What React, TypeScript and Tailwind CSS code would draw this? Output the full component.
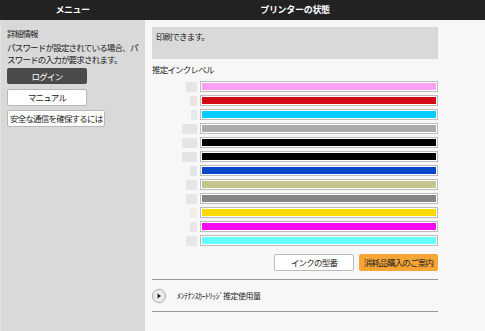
import React from "react";

const inks: { color: string; sq: string; w: string }[] = [
  { color: "#f9a0f6", sq: "#e6e4e6", w: "w-[11px]" },
  { color: "#d20a16", sq: "#efe2e4", w: "w-[7px]" },
  { color: "#00ccff", sq: "#e2ecef", w: "w-[6px]" },
  { color: "#ababab", sq: "#e4e4e4", w: "w-[15px]" },
  { color: "#000000", sq: "#e4e4e4", w: "w-[15px]" },
  { color: "#000000", sq: "#e4e4e4", w: "w-[15px]" },
  { color: "#0a46c8", sq: "#e2e4ee", w: "w-[7px]" },
  { color: "#c4c48e", sq: "#e6e6e6", w: "w-[11px]" },
  { color: "#858585", sq: "#e6e6e6", w: "w-[11px]" },
  { color: "#ffd800", sq: "#efefe4", w: "w-[7px]" },
  { color: "#f50af2", sq: "#ede2ed", w: "w-[7px]" },
  { color: "#66ffff", sq: "#e6e8e8", w: "w-[11px]" },
];

const font = "font-['Noto_Sans_CJK_JP','Noto_Sans',sans-serif]";

export default function App() {
  return (
    <div className={`w-[485px] h-[331px] flex flex-col bg-[#f7f7f7] text-[#222] ${font} overflow-hidden`}>
      <div className="flex h-[20px] bg-[#222222] text-white text-[9px] font-bold leading-[20px] shrink-0">
        <div className="w-[145px] text-center tracking-[-0.5px]">メニュー</div>
        <div className="w-[300px] text-center tracking-[-0.3px]">プリンターの状態</div>
      </div>
      <div className="flex flex-1">
        <div className="w-[145px] bg-[#d9d9d9] border-l border-[#e2e2e2] pl-[6px] pt-[8px] flex flex-col items-start">
          <div className="text-[8.5px] leading-[11px] tracking-[-0.8px]">詳細情報</div>
          <div className="mt-[2px] text-[8.5px] leading-[12px] tracking-[-0.8px] whitespace-nowrap">
            パスワードが設定されている場合、パ
            <br />
            スワードの入力が要求されます。
          </div>
          <div className="mt-[3px] w-[80px] h-[16px] bg-[#4b4b4b] rounded-[2px] text-white text-[8.5px] leading-[16px] text-center tracking-[-0.8px]">
            ログイン
          </div>
          <div className="mt-[5px] w-[80px] h-[17px] bg-white border border-[#b8b8b8] rounded-[2px] text-[8.5px] leading-[15px] text-center tracking-[-0.8px]">
            マニュアル
          </div>
          <div className="mt-[4px] h-[17px] bg-white border border-[#b8b8b8] rounded-[2px] px-[2px] text-[8.5px] leading-[15px] tracking-[-0.8px] whitespace-nowrap">
            安全な通信を確保するには
          </div>
        </div>
        <div className="flex-1 pl-[7px] pt-[7px]">
          <div className="w-[286px]">
            <div className="h-[32px] bg-[#d9d9d9] px-[4px] pt-[3px] text-[8.5px] leading-[12px] tracking-[-0.8px]">
              印刷できます。
            </div>
            <div className="mt-[4px] text-[8.5px] leading-[12px] tracking-[-0.8px]">推定インクレベル</div>
            <div className="mt-[6px] flex flex-col gap-[3px]">
              {inks.map((ink, i) => (
                <div key={i} className="flex items-center h-[11px]">
                  <div className="w-[48px] flex justify-end pr-[3px]">
                    <div className={`${ink.w} h-[10px] rounded-[1px]`} style={{ background: ink.sq }} />
                  </div>
                  <div className="flex-1 h-[11px] border border-[#bcbcbc] bg-white p-[1px]">
                    <div className="w-full h-full" style={{ background: ink.color }} />
                  </div>
                </div>
              ))}
            </div>
            <div className="mt-[8px] flex justify-end gap-[5px]">
              <div className="w-[80px] h-[17px] bg-white border border-[#bcbcbc] rounded-[2px] text-[8.5px] leading-[15px] text-center tracking-[-0.8px]">
                インクの型番
              </div>
              <div className="w-[79px] h-[17px] bg-[#f7a535] rounded-[2px] text-[8.5px] leading-[17px] text-center tracking-[-0.8px]">
                消耗品購入のご案内
              </div>
            </div>
            <div className="mt-[8px] border-t border-[#999]" />
            <div className="h-[31px] flex items-center">
              <div className="w-[14px] h-[14px] rounded-full border border-[#aaa] bg-[#ececec] flex items-center justify-center">
                <svg width="6" height="6" viewBox="0 0 6 6">
                  <polygon points="1.5,0.5 5,3 1.5,5.5" fill="#222" />
                </svg>
              </div>
              <div className="ml-[11px] text-[8px] leading-[10px] tracking-[-0.5px]">ﾒﾝﾃﾅﾝｽｶｰﾄﾘｯｼﾞ推定使用量</div>
            </div>
            <div className="border-t border-[#999]" />
          </div>
        </div>
      </div>
    </div>
  );
}
